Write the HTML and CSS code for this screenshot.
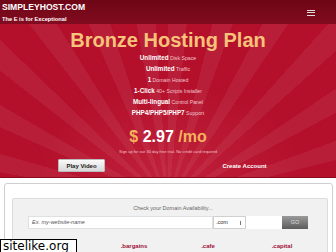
FILE: index.html
```html
<!DOCTYPE html>
<html>
<head>
<meta charset="utf-8">
<link rel="stylesheet" href="styles.css">
</head>
<body>
<header class="topbar">
  <div class="brand">
    <div class="brand-name">SIMPLEYHOST.COM</div>
    <div class="brand-tag">The E is for Exceptional</div>
  </div>
  <div class="burger"><span></span><span></span><span></span></div>
</header>
<section class="hero">
  <h1 class="title">Bronze Hosting Plan</h1>
  <ul class="features">
    <li><b>Unlimited</b> Disk Space</li>
    <li><b>Unlimited</b> Traffic</li>
    <li><b>1</b> Domain Hosted</li>
    <li><b>1-Click</b> 40+ Scripts Installer</li>
    <li><b>Multi-lingual</b> Control Panel</li>
    <li><b>PHP4/PHP5/PHP7</b> Support</li>
  </ul>
  <div class="price"><span class="cur">$</span> <span class="amt">2.97</span> <span class="per">/mo</span></div>
  <div class="trial">Sign up for our 30 day free trial. No credit card required</div>
  <div class="actions">
    <div class="act"><button class="btn-video">Play Video</button></div>
    <div class="act"><a class="create">Create Account</a></div>
  </div>
</section>
<section class="domain-box">
  <div class="panel">
    <div class="check">Check your Domain Availability...</div>
    <div class="search">
      <div class="input">Ex. my-website-name</div>
      <div class="select">.com<span class="arrow"></span></div>
      <div class="blank"></div>
      <div class="go">GO</div>
    </div>
    <div class="tlds">
      <span class="tld-empty"></span>
      <a>.bargains</a>
      <a>.cafe</a>
      <a>.capital</a>
    </div>
  </div>
</section>
<div class="watermark">sitelike.org</div>
</body>
</html>
```
FILE: styles.css
```css
* { box-sizing: border-box; }
html, body { margin: 0; padding: 0; }
body {
  width: 336px;
  height: 252px;
  overflow: hidden;
  font-family: "Liberation Sans", Arial, sans-serif;
  background: #fff;
  position: relative;
}
.topbar {
  height: 24px;
  background: linear-gradient(#6e0616, #820b20);
  display: flex;
  justify-content: space-between;
  align-items: flex-start;
  padding: 2px 21px 0 2px;
  color: #fff;
}
.brand-name {
  font-size: 8.6px;
  font-weight: bold;
  line-height: 10px;
}
.brand-tag {
  font-size: 5.7px;
  font-weight: bold;
  line-height: 7px;
  margin-top: 4px;
}
.burger {
  margin-top: 8px;
  display: flex;
  flex-direction: column;
  gap: 1.2px;
}
.burger span {
  display: block;
  width: 8px;
  height: 1.1px;
  background: #ddd;
}
.hero {
  height: 154px;
  background:
    radial-gradient(ellipse 190px 130px at 168px 150px, rgba(255,120,140,0.16), rgba(255,120,140,0) 70%),
    repeating-conic-gradient(from 0deg at 168px 178px, rgba(255,255,255,0.06) 0deg 6deg, rgba(255,255,255,0) 6deg 14deg),
    #b4102b;
  border-bottom: 1px solid #8a0a1e;
  text-align: center;
  padding-top: 5px;
}
.title {
  margin: 0;
  font-size: 20px;
  line-height: 22px;
  font-weight: bold;
  color: #f7c27a;
}
.features {
  list-style: none;
  margin: 1px 0 0;
  padding: 0;
  font-size: 5.2px;
  color: #f2c4cc;
}
.features li {
  height: 11px;
  line-height: 11px;
  overflow: hidden;
}
.features b {
  color: #fff;
  font-size: 6.3px;
  line-height: 11px;
}
.price {
  margin-top: 10px;
  font-size: 16px;
  font-weight: bold;
  line-height: 18px;
  color: #fff;
}
.price .cur, .price .per { color: #f7b25e; }
.trial {
  font-size: 4px;
  line-height: 6px;
  margin-top: 3px;
  color: #f2c4cc;
}
.actions {
  display: grid;
  grid-template-columns: 1fr 1fr;
  padding-right: 10px;
  margin-top: 4px;
  align-items: center;
}
.act { display: flex; justify-content: center; }
.btn-video {
  font-family: inherit;
  font-size: 6px;
  font-weight: bold;
  color: #222;
  width: 47px;
  height: 13px;
  padding: 0;
  border: 1px solid #bbb;
  border-radius: 1px;
  background: linear-gradient(#fafafa, #d8d8d8);
}
.create {
  font-size: 6px;
  font-weight: bold;
  color: #fff;
}
.domain-box {
  margin: 5px 3px 0 4px;
  border: 1px solid #cfcfcf;
  border-radius: 3px;
  background: #fff;
  padding: 14px 4px 20px 7px;
}
.panel {
  background: #f1f1f1;
  border: 1px solid #dcdcdc;
  border-radius: 2px;
  padding: 5px 19px 10px 15px;
}
.check {
  text-align: center;
  font-size: 5.5px;
  color: #666;
  line-height: 8px;
  padding-left: 10px;
}
.search {
  display: flex;
  height: 13px;
  margin-top: 4px;
}
.input {
  width: 185px;
  background: #fff;
  border: 1px solid #e0e0e0;
  font-size: 5.5px;
  font-style: italic;
  color: #555;
  line-height: 11px;
  padding-left: 3px;
}
.select {
  width: 33px;
  background: #fff;
  border: 1px solid #d0d0d0;
  font-size: 5.5px;
  color: #333;
  line-height: 11px;
  padding-left: 2px;
  position: relative;
}
.arrow {
  position: absolute;
  right: 4px;
  top: 4px;
  width: 1px;
  height: 4px;
  background: #777;
}
.blank {
  width: 36px;
  background: #fff;
}
.go {
  width: 26px;
  background: linear-gradient(#9a9a9a, #5c5c5c);
  color: #ddd;
  font-size: 5.5px;
  line-height: 13px;
  text-align: center;
}
.tlds {
  display: grid;
  grid-template-columns: repeat(4, 74px);
  margin-top: 13px;
  margin-left: -5px;
}
.tlds a {
  text-align: center;
  font-size: 6px;
  font-weight: bold;
  color: #a0103a;
  line-height: 8px;
}
.watermark {
  position: absolute;
  left: 0;
  top: 239px;
  width: 77px;
  height: 14px;
  background: #fff;
  border: 1px solid #000;
  font-family: "DejaVu Sans", sans-serif;
  font-size: 12px;
  line-height: 12px;
  padding-left: 2px;
  color: #000;
}
```
